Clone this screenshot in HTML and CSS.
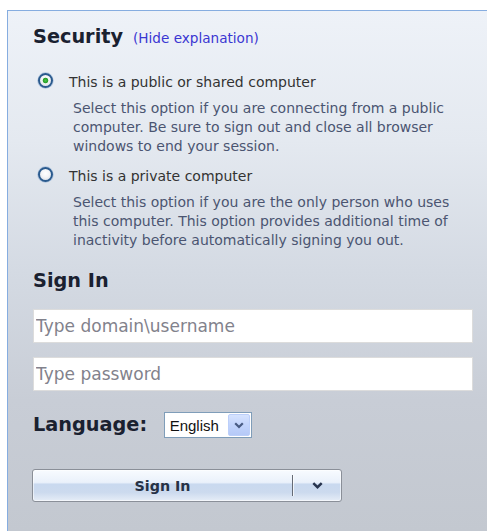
FILE: index.html
```html
<!DOCTYPE html>
<html lang="en">
<head>
<meta charset="utf-8">
<title>Sign In</title>
<link rel="stylesheet" href="styles.css">
</head>
<body>
<form class="panel" action="#" onsubmit="return false">
  <div class="section-head">
    <h2 class="heading">Security</h2>
    <a class="explain-link" href="#">(Hide explanation)</a>
  </div>

  <div class="option option-first">
    <input class="radio" type="radio" name="trust" id="public" checked>
    <label class="option-label" for="public">This is a public or shared computer</label>
    <p class="option-desc">Select this option if you are connecting from a public computer. Be sure to sign out and close all browser windows to end your session.</p>
  </div>

  <div class="option">
    <input class="radio" type="radio" name="trust" id="private">
    <label class="option-label" for="private">This is a private computer</label>
    <p class="option-desc">Select this option if you are the only person who uses this computer. This option provides additional time of inactivity before automatically signing you out.</p>
  </div>

  <h2 class="heading signin-head">Sign In</h2>
  <input class="field field-user" type="text" placeholder="Type domain\username">
  <input class="field field-pass" type="password" placeholder="Type password">

  <div class="lang-row">
    <span class="lang-label">Language:</span>
    <div class="lang-select">
      <span class="lang-value">English</span>
      <span class="lang-arrow">
        <svg width="10" height="7" viewBox="0 0 10 7"><path d="M1.2 1.2 L5 5 L8.8 1.2" fill="none" stroke="#485b83" stroke-width="2.2"/></svg>
      </span>
    </div>
  </div>

  <div class="signin-btn">
    <button class="btn-main" type="submit">Sign In</button>
    <span class="btn-sep"></span>
    <button class="btn-menu" type="button">
      <svg width="11" height="7" viewBox="0 0 11 7"><path d="M1.3 1.2 L5.5 5.2 L9.7 1.2" fill="none" stroke="#27344e" stroke-width="2.5"/></svg>
    </button>
  </div>
</form>
</body>
</html>
```
FILE: styles.css
```css
html, body {
  margin: 0;
  background: #ffffff;
}

body {
  font-family: "DejaVu Sans", Verdana, sans-serif;
  overflow: hidden;
}

/* sign-in panel with its blue top/left rule and grey-blue gradient */
.panel {
  display: block;
  box-sizing: border-box;
  height: 521px;
  margin: 10px 0 0 7px;
  padding: 15px 14px 0 25px;
  border-top: 1px solid #86ade0;
  border-left: 1px solid #86ade0;
  background: linear-gradient(to bottom, #eef2f8 0%, #e4e9f0 25%, #d4dae3 50%, #c8cdd6 75%, #c3c8d0 100%);
}

.section-head {
  display: flex;
  align-items: baseline;
  gap: 10px;
}

.heading {
  margin: 0;
  font-size: 19.3px;
  line-height: 22px;
  font-weight: bold;
  color: #1a2130;
}

.explain-link {
  font-size: 13.6px;
  color: #3a36d2;
  text-decoration: none;
}

/* radio option: button, label, explanation */
.option {
  display: grid;
  grid-template-columns: 15px 1fr;
  column-gap: 16px;
  margin: 11.6px 0 0 5px;
  font-size: 14px;
  line-height: 19px;
}

.option-first {
  margin-top: 24.6px;
}

.radio {
  appearance: none;
  -webkit-appearance: none;
  grid-row: 1;
  grid-column: 1;
  box-sizing: border-box;
  width: 15px;
  height: 15px;
  margin: 0;
  border: 2px solid #2a5a8e;
  border-radius: 50%;
  background: radial-gradient(circle at 50% 40%, #ffffff 0%, #f4f5f7 45%, #d0d6df 100%);
  box-shadow: 0 0 0 0.7px rgba(130, 165, 210, 0.55);
}

.radio:checked {
  background:
    radial-gradient(circle, #4ac64a 0, #2a9d2a 2.4px, transparent 3.2px),
    radial-gradient(circle at 50% 40%, #ffffff 0%, #f4f5f7 45%, #d0d6df 100%);
}

.option-label {
  grid-row: 1;
  grid-column: 2;
  color: #333333;
}

.option-desc {
  grid-row: 2;
  grid-column: 2;
  margin: 7px 0 0;
  padding-left: 4px;
  color: #4b5571;
}

.signin-head {
  margin-top: 19.5px;
}

/* text fields */
.field {
  display: block;
  box-sizing: border-box;
  width: 440px;
  height: 34px;
  margin: 17.5px 0 0;
  padding: 0 2px;
  border: 1px solid #dcdcdc;
  background: #ffffff;
  font-family: "DejaVu Sans", Verdana, sans-serif;
  font-size: 17px;
  color: #222;
  outline: none;
}

.field::placeholder {
  color: #82828c;
}

.field-pass {
  margin-top: 14px;
}

/* language picker */
.lang-row {
  display: flex;
  align-items: center;
  gap: 16.5px;
  margin-top: 21px;
}

.lang-label {
  font-size: 19.3px;
  line-height: 22px;
  font-weight: bold;
  color: #1a2130;
}

.lang-select {
  display: flex;
  align-items: center;
  box-sizing: border-box;
  width: 88px;
  height: 26px;
  border: 1px solid #7f9db9;
  background: #ffffff;
}

.lang-value {
  flex: 1;
  padding-left: 5px;
  font-family: "Liberation Sans", Arial, sans-serif;
  font-size: 15px;
  color: #111111;
}

.lang-arrow {
  display: flex;
  align-items: center;
  justify-content: center;
  box-sizing: border-box;
  width: 22px;
  height: 22px;
  margin-right: 1px;
  border: 1px solid #bccffa;
  border-radius: 2px;
  background: linear-gradient(to bottom, #d6e3fe 0%, #c2d4fc 50%, #b5c9f7 100%);
}

/* split sign-in button */
.signin-btn {
  display: flex;
  box-sizing: border-box;
  width: 310px;
  height: 33px;
  margin: 31px 0 0 -1px;
  border: 1px solid #8a8f98;
  border-radius: 3px;
  background: linear-gradient(to bottom, #f8fbff 0%, #eaf1fb 40%, #c9d9ef 46%, #ccdaee 72%, #e6edf7 100%);
  box-shadow: inset 0 0 0 1px rgba(255, 255, 255, 0.55);
}

.btn-main,
.btn-menu {
  display: flex;
  align-items: center;
  justify-content: center;
  margin: 0;
  padding: 0;
  border: 0;
  background: transparent;
  font-family: "DejaVu Sans", Verdana, sans-serif;
  font-size: 14.3px;
  font-weight: bold;
  color: #263246;
}

.btn-main {
  width: 259px;
}

.btn-sep {
  width: 1px;
  margin: 5px 0;
  background: #656b76;
  box-shadow: 1px 0 0 rgba(255, 255, 255, 0.7);
}

.btn-menu {
  flex: 1;
}
```
